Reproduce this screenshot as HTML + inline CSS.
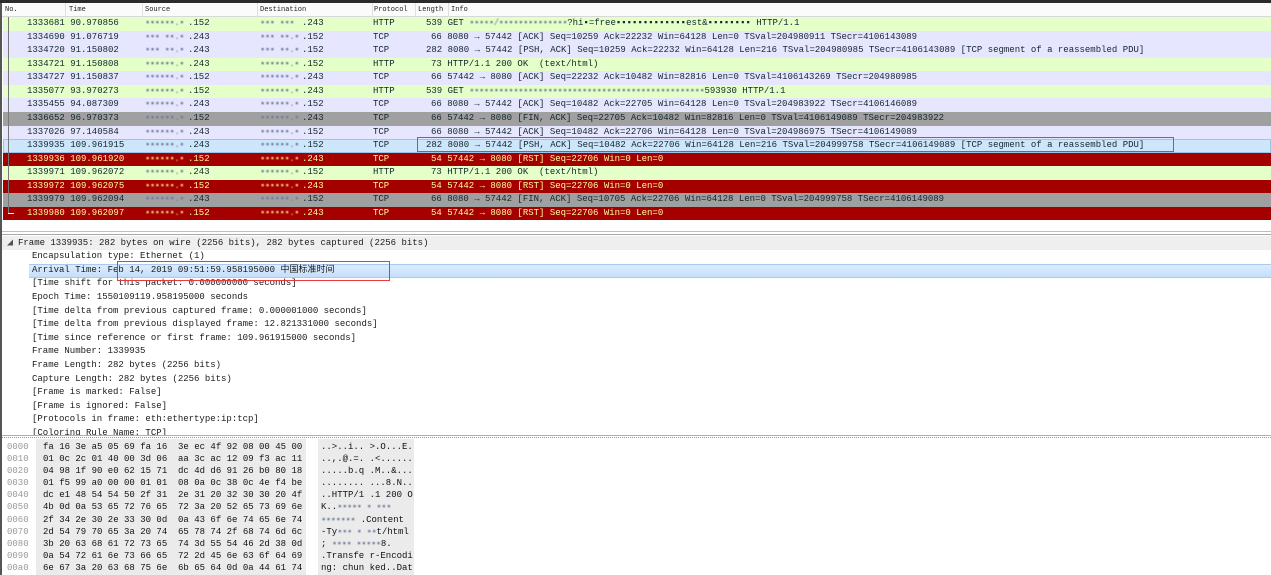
<!DOCTYPE html>
<html><head><meta charset="utf-8"><style>
*{margin:0;padding:0;box-sizing:border-box}
body{width:1271px;height:575px;overflow:hidden;background:#fff;font-family:"Liberation Mono","Noto Sans CJK SC",monospace;font-size:9px;position:relative}
#top{position:absolute;left:0;top:0;width:1271px;height:3px;background:#2b2b2b}
#hdr{position:absolute;left:2px;top:3px;width:1269px;height:14px;background:#fbfbfb;border-bottom:1px solid #d8d8d8;font-size:7px;color:#222}
#hdr span{position:absolute;top:3px}
#hdr i{position:absolute;top:0;height:14px;border-left:1px solid #e0e0e0}
.row{position:absolute;left:3px;width:1268px;height:13.57px;line-height:13.57px;color:#12272e}
.row span{position:absolute;top:0;white-space:pre}
.h{background:#e4ffc7}.t{background:#e7e6ff}.g{background:#a0a0a0}.r{background:#a40000;color:#fffc9c}
.s{background:#cde6fb;box-shadow:inset 0 0 0 1px #9cc3e8}
.bl{letter-spacing:-0.5px;color:#6b7a9a;filter:blur(0.4px)}
.r .bl{color:#f6d27a}
#lborder{position:absolute;left:0;top:3px;width:2px;height:572px;background:#555}
.dl{position:absolute;left:0;width:1271px;height:13.6px;line-height:13.6px;color:#1a1a1a;white-space:pre}
.hx{position:absolute;line-height:12.1px;white-space:pre;color:#111}
</style></head><body>
<div id="top"></div>
<div id="hdr">
<span style="left:3px">No.</span><i style="left:63px"></i>
<span style="left:67px">Time</span><i style="left:140px"></i>
<span style="left:143px">Source</span><i style="left:255px"></i>
<span style="left:258px">Destination</span><i style="left:370px"></i>
<span style="left:372px">Protocol</span><i style="left:413px"></i>
<span style="left:416px">Length</span><i style="left:446px"></i>
<span style="left:449px">Info</span>
</div>
<div id="lborder"></div>

<div class="row h" style="top:17px"><span style="left:24px">1333681 90.970856</span><span style="left:142px" class="bl">▪▪▪▪▪▪.▪</span><span style="left:185px">.152</span><span style="left:257px" class="bl">▪▪▪ ▪▪▪</span><span style="left:299px">.243</span><span style="left:370px">HTTP</span><span style="left:423px">539 GET <b class="bl" style="font-weight:normal">▪▪▪▪▪/▪▪▪▪▪▪▪▪▪▪▪▪▪▪</b>?hi▪=free▪▪▪▪▪▪▪▪▪▪▪▪▪est&▪▪▪▪▪▪▪▪ HTTP/1.1</span></div>
<div class="row t" style="top:30.6px"><span style="left:24px">1334690 91.076719</span><span style="left:142px" class="bl">▪▪▪ ▪▪.▪</span><span style="left:185px">.243</span><span style="left:257px" class="bl">▪▪▪ ▪▪.▪</span><span style="left:299px">.152</span><span style="left:370px">TCP</span><span style="left:428px">66 8080 → 57442 [ACK] Seq=10259 Ack=22232 Win=64128 Len=0 TSval=204980911 TSecr=4106143089</span></div>
<div class="row t" style="top:44.1px"><span style="left:24px">1334720 91.150802</span><span style="left:142px" class="bl">▪▪▪ ▪▪.▪</span><span style="left:185px">.243</span><span style="left:257px" class="bl">▪▪▪ ▪▪.▪</span><span style="left:299px">.152</span><span style="left:370px">TCP</span><span style="left:423px">282 8080 → 57442 [PSH, ACK] Seq=10259 Ack=22232 Win=64128 Len=216 TSval=204980985 TSecr=4106143089 [TCP segment of a reassembled PDU]</span></div>
<div class="row h" style="top:57.7px"><span style="left:24px">1334721 91.150808</span><span style="left:142px" class="bl">▪▪▪▪▪▪.▪</span><span style="left:185px">.243</span><span style="left:257px" class="bl">▪▪▪▪▪▪.▪</span><span style="left:299px">.152</span><span style="left:370px">HTTP</span><span style="left:428px">73 HTTP/1.1 200 OK  (text/html)</span></div>
<div class="row t" style="top:71.3px"><span style="left:24px">1334727 91.150837</span><span style="left:142px" class="bl">▪▪▪▪▪▪.▪</span><span style="left:185px">.152</span><span style="left:257px" class="bl">▪▪▪▪▪▪.▪</span><span style="left:299px">.243</span><span style="left:370px">TCP</span><span style="left:428px">66 57442 → 8080 [ACK] Seq=22232 Ack=10482 Win=82816 Len=0 TSval=4106143269 TSecr=204980985</span></div>
<div class="row h" style="top:84.8px"><span style="left:24px">1335077 93.970273</span><span style="left:142px" class="bl">▪▪▪▪▪▪.▪</span><span style="left:185px">.152</span><span style="left:257px" class="bl">▪▪▪▪▪▪.▪</span><span style="left:299px">.243</span><span style="left:370px">HTTP</span><span style="left:423px">539 GET <b class="bl" style="font-weight:normal">▪▪▪▪▪▪▪▪▪▪▪▪▪▪▪▪▪▪▪▪▪▪▪▪▪▪▪▪▪▪▪▪▪▪▪▪▪▪▪▪▪▪▪▪▪▪▪▪</b>593930 HTTP/1.1</span></div>
<div class="row t" style="top:98.4px"><span style="left:24px">1335455 94.087309</span><span style="left:142px" class="bl">▪▪▪▪▪▪.▪</span><span style="left:185px">.243</span><span style="left:257px" class="bl">▪▪▪▪▪▪.▪</span><span style="left:299px">.152</span><span style="left:370px">TCP</span><span style="left:428px">66 8080 → 57442 [ACK] Seq=10482 Ack=22705 Win=64128 Len=0 TSval=204983922 TSecr=4106146089</span></div>
<div class="row g" style="top:112px"><span style="left:24px">1336652 96.970373</span><span style="left:142px" class="bl">▪▪▪▪▪▪.▪</span><span style="left:185px">.152</span><span style="left:257px" class="bl">▪▪▪▪▪▪.▪</span><span style="left:299px">.243</span><span style="left:370px">TCP</span><span style="left:428px">66 57442 → 8080 [FIN, ACK] Seq=22705 Ack=10482 Win=82816 Len=0 TSval=4106149089 TSecr=204983922</span></div>
<div class="row t" style="top:125.5px"><span style="left:24px">1337026 97.140584</span><span style="left:142px" class="bl">▪▪▪▪▪▪.▪</span><span style="left:185px">.243</span><span style="left:257px" class="bl">▪▪▪▪▪▪.▪</span><span style="left:299px">.152</span><span style="left:370px">TCP</span><span style="left:428px">66 8080 → 57442 [ACK] Seq=10482 Ack=22706 Win=64128 Len=0 TSval=204986975 TSecr=4106149089</span></div>
<div class="row s" style="top:139.1px"><span style="left:24px">1339935 109.961915</span><span style="left:142px" class="bl">▪▪▪▪▪▪.▪</span><span style="left:185px">.243</span><span style="left:257px" class="bl">▪▪▪▪▪▪.▪</span><span style="left:299px">.152</span><span style="left:370px">TCP</span><span style="left:423px">282 8080 → 57442 [PSH, ACK] Seq=10482 Ack=22706 Win=64128 Len=216 TSval=204999758 TSecr=4106149089 [TCP segment of a reassembled PDU]</span></div>
<div class="row r" style="top:152.7px"><span style="left:24px">1339936 109.961920</span><span style="left:142px" class="bl">▪▪▪▪▪▪.▪</span><span style="left:185px">.152</span><span style="left:257px" class="bl">▪▪▪▪▪▪.▪</span><span style="left:299px">.243</span><span style="left:370px">TCP</span><span style="left:428px">54 57442 → 8080 [RST] Seq=22706 Win=0 Len=0</span></div>
<div class="row h" style="top:166.2px"><span style="left:24px">1339971 109.962072</span><span style="left:142px" class="bl">▪▪▪▪▪▪.▪</span><span style="left:185px">.243</span><span style="left:257px" class="bl">▪▪▪▪▪▪.▪</span><span style="left:299px">.152</span><span style="left:370px">HTTP</span><span style="left:428px">73 HTTP/1.1 200 OK  (text/html)</span></div>
<div class="row r" style="top:179.8px"><span style="left:24px">1339972 109.962075</span><span style="left:142px" class="bl">▪▪▪▪▪▪.▪</span><span style="left:185px">.152</span><span style="left:257px" class="bl">▪▪▪▪▪▪.▪</span><span style="left:299px">.243</span><span style="left:370px">TCP</span><span style="left:428px">54 57442 → 8080 [RST] Seq=22706 Win=0 Len=0</span></div>
<div class="row g" style="top:193.4px"><span style="left:24px">1339979 109.962094</span><span style="left:142px" class="bl">▪▪▪▪▪▪.▪</span><span style="left:185px">.243</span><span style="left:257px" class="bl">▪▪▪▪▪▪.▪</span><span style="left:299px">.152</span><span style="left:370px">TCP</span><span style="left:428px">66 8080 → 57442 [FIN, ACK] Seq=10705 Ack=22706 Win=64128 Len=0 TSval=204999758 TSecr=4106149089</span></div>
<div class="row r" style="top:206.9px"><span style="left:24px">1339980 109.962097</span><span style="left:142px" class="bl">▪▪▪▪▪▪.▪</span><span style="left:185px">.152</span><span style="left:257px" class="bl">▪▪▪▪▪▪.▪</span><span style="left:299px">.243</span><span style="left:370px">TCP</span><span style="left:428px">54 57442 → 8080 [RST] Seq=22706 Win=0 Len=0</span></div>
<div style="position:absolute;left:8px;top:17px;width:1px;height:197px;background:#777"></div>
<div style="position:absolute;left:8px;top:213px;width:6px;height:1px;background:#fffc9c"></div>

<div style="position:absolute;left:417px;top:137px;width:757px;height:15px;border:1.5px solid #e8393f"></div>

<div style="position:absolute;left:2px;top:231px;width:1269px;height:1px;background:#bdbdbd"></div>
<div style="position:absolute;left:2px;top:234px;width:1269px;height:1px;background:#a8a8a8"></div>
<div style="position:absolute;left:2px;top:236px;width:1269px;height:14px;background:#efefef"></div>
<div style="position:absolute;left:29px;top:264px;width:1242px;height:13.6px;background:linear-gradient(#dcecfd,#c4dffb);border-top:1px solid #a9c9ee;border-bottom:1px solid #a9c9ee"></div>
<div class="dl" style="top:236.5px"><span style="position:absolute;left:7px;font-size:6px;color:#555">◢</span><span style="position:absolute;left:18px">Frame 1339935: 282 bytes on wire (2256 bits), 282 bytes captured (2256 bits)</span></div>
<div class="dl" style="top:250.1px;left:32px">Encapsulation type: Ethernet (1)</div>
<div class="dl" style="top:263.7px;left:32px">Arrival Time: Feb 14, 2019 09:51:59.958195000 中国标准时间</div>
<div class="dl" style="top:277.3px;left:32px">[Time shift for this packet: 0.000000000 seconds]</div>
<div class="dl" style="top:290.9px;left:32px">Epoch Time: 1550109119.958195000 seconds</div>
<div class="dl" style="top:304.5px;left:32px">[Time delta from previous captured frame: 0.000001000 seconds]</div>
<div class="dl" style="top:318.1px;left:32px">[Time delta from previous displayed frame: 12.821331000 seconds]</div>
<div class="dl" style="top:331.7px;left:32px">[Time since reference or first frame: 109.961915000 seconds]</div>
<div class="dl" style="top:345.3px;left:32px">Frame Number: 1339935</div>
<div class="dl" style="top:358.9px;left:32px">Frame Length: 282 bytes (2256 bits)</div>
<div class="dl" style="top:372.5px;left:32px">Capture Length: 282 bytes (2256 bits)</div>
<div class="dl" style="top:386.1px;left:32px">[Frame is marked: False]</div>
<div class="dl" style="top:399.7px;left:32px">[Frame is ignored: False]</div>
<div class="dl" style="top:413.3px;left:32px">[Protocols in frame: eth:ethertype:ip:tcp]</div>
<div class="dl" style="top:426.9px;left:32px;height:8px;overflow:hidden">[Coloring Rule Name: TCP]</div>
<div style="position:absolute;left:117px;top:261px;width:273px;height:20px;border:1.5px solid #e8393f"></div>

<div style="position:absolute;left:2px;top:435px;width:1269px;height:1px;background:#b0b0b0"></div>
<div style="position:absolute;left:2px;top:437px;width:1269px;height:1px;border-top:1px dotted #999"></div>
<div style="position:absolute;left:36px;top:439px;width:270px;height:136px;background:#ebebeb"></div>
<div style="position:absolute;left:318px;top:439px;width:96px;height:136px;background:#ebebeb"></div>
<div class="hx" style="top:441px;left:7px;color:#9a9a9a">0000
0010
0020
0030
0040
0050
0060
0070
0080
0090
00a0</div>
<div class="hx" style="top:441px;left:43px">fa 16 3e a5 05 69 fa 16  3e ec 4f 92 08 00 45 00
01 0c 2c 01 40 00 3d 06  aa 3c ac 12 09 f3 ac 11
04 98 1f 90 e0 62 15 71  dc 4d d6 91 26 b0 80 18
01 f5 99 a0 00 00 01 01  08 0a 0c 38 0c 4e f4 be
dc e1 48 54 54 50 2f 31  2e 31 20 32 30 30 20 4f
4b 0d 0a 53 65 72 76 65  72 3a 20 52 65 73 69 6e
2f 34 2e 30 2e 33 30 0d  0a 43 6f 6e 74 65 6e 74
2d 54 79 70 65 3a 20 74  65 78 74 2f 68 74 6d 6c
3b 20 63 68 61 72 73 65  74 3d 55 54 46 2d 38 0d
0a 54 72 61 6e 73 66 65  72 2d 45 6e 63 6f 64 69
6e 67 3a 20 63 68 75 6e  6b 65 64 0d 0a 44 61 74</div>
<div class="hx" style="top:441px;left:321px">..&gt;..i.. &gt;.O...E.
..,.@.=. .&lt;......
.....b.q .M..&amp;...
........ ...8.N..
..HTTP/1 .1 200 O
K..<span class="bl">▪▪▪▪▪ ▪ ▪▪▪</span>
<span class="bl">▪▪▪▪▪▪▪</span> .Content
-Ty<span class="bl">▪▪▪ ▪ ▪▪</span>t/html
; <span class="bl">▪▪▪▪ ▪▪▪▪▪</span>8.
.Transfe r-Encodi
ng: chun ked..Dat</div>
</body></html>
